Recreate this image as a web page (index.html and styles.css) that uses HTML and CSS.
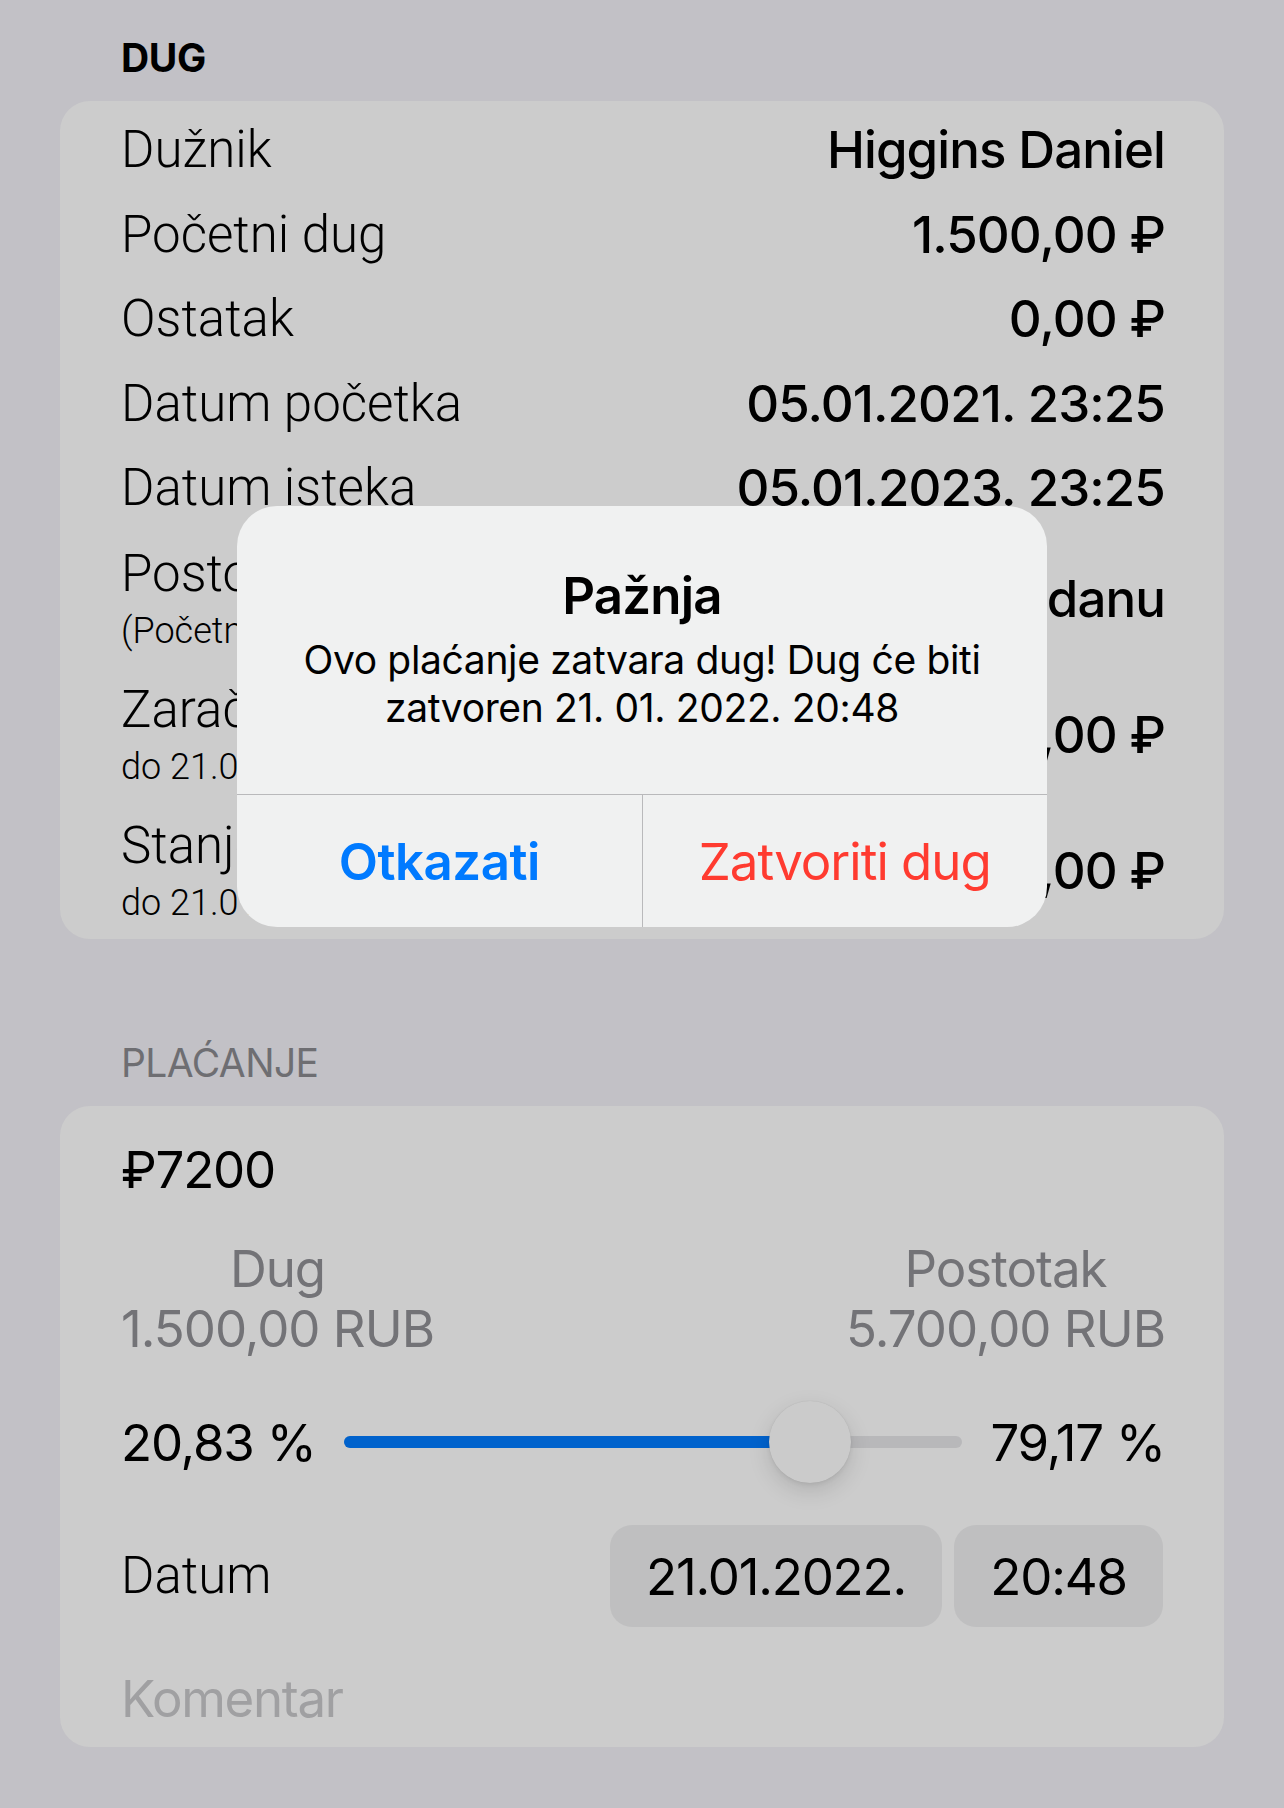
FILE: index.html
```html
<!DOCTYPE html>
<html lang="hr">
<head>
<meta charset="utf-8">
<title>Dug</title>
<link rel="stylesheet" href="styles.css">
</head>
<body>
<div class="screen">
  <div class="section-header header-debt">DUG</div>
  <div class="card card-debt">
    <div class="row"><span class="label">Dužnik</span><span class="value">Higgins Daniel</span></div>
    <div class="row"><span class="label">Početni dug</span><span class="value">1.500,00 ₽</span></div>
    <div class="row"><span class="label">Ostatak</span><span class="value">0,00 ₽</span></div>
    <div class="row"><span class="label">Datum početka</span><span class="value">05.01.2021. 23:25</span></div>
    <div class="row"><span class="label">Datum isteka</span><span class="value">05.01.2023. 23:25</span></div>
    <div class="row row-two">
      <div class="label-stack"><span class="label">Postotak</span><span class="sub">(Početni dug)</span></div>
      <span class="value">1,00 % po danu</span>
    </div>
    <div class="row row-two">
      <div class="label-stack"><span class="label">Zaračunato</span><span class="sub">do 21.01.2022.</span></div>
      <span class="value">5.700,00 ₽</span>
    </div>
    <div class="row row-two">
      <div class="label-stack"><span class="label">Stanje</span><span class="sub">do 21.01.2022.</span></div>
      <span class="value">7.200,00 ₽</span>
    </div>
  </div>

  <div class="section-header header-pay">PLAĆANJE</div>
  <div class="card card-pay">
    <div class="amount-row">₽7200</div>
    <div class="split-row">
      <div class="split-col"><span>Dug</span><span>1.500,00 RUB</span></div>
      <div class="split-col"><span>Postotak</span><span>5.700,00 RUB</span></div>
    </div>
    <div class="slider-row">
      <span class="pct">20,83 %</span>
      <div class="track">
        <div class="track-fill"></div>
        <div class="thumb"></div>
      </div>
      <span class="pct">79,17 %</span>
    </div>
    <div class="date-row">
      <span class="label">Datum</span>
      <div class="pills">
        <span class="pill pill-date">21.01.2022.</span>
        <span class="pill pill-time">20:48</span>
      </div>
    </div>
    <div class="comment-row">Komentar</div>
  </div>
</div>

<div class="alert">
  <div class="alert-body">
    <div class="alert-title">Pažnja</div>
    <div class="alert-msg">
      <span class="msg-line">Ovo plaćanje zatvara dug! Dug će biti</span>
      <span class="msg-line">zatvoren 21. 01. 2022. 20:48</span>
    </div>
  </div>
  <div class="alert-actions">
    <div class="alert-btn btn-cancel">Otkazati</div>
    <div class="alert-btn btn-destructive">Zatvoriti dug</div>
  </div>
</div>
</body>
</html>
```

FILE: styles.css
```css
* {
  box-sizing: border-box;
}

html, body {
  margin: 0;
  padding: 0;
}

body {
  width: 1284px;
  height: 1808px;
  background: #c2c1c6;
  font-family: Inter, "Noto Sans", "DejaVu Sans", sans-serif;
  color: #000;
  position: relative;
  overflow: hidden;
}

.screen {
  padding: 0 60px;
}

.section-header {
  font-size: 39px;
  line-height: 47px;
  padding-left: 61px;
  letter-spacing: -0.3px;
}

.header-debt {
  height: 101px;
  padding-top: 34px;
  font-weight: 700;
}

.header-pay {
  height: 167px;
  padding-top: 100px;
  font-weight: 400;
  letter-spacing: -0.6px;
  color: #6e6e72;
}

.card {
  background: #cccccc;
  border-radius: 30px;
  padding: 0 59px 0 61px;
}

.card-debt {
  padding-top: 7px;
  height: 838px;
}

.row {
  height: 84.5px;
  display: flex;
  align-items: center;
  justify-content: space-between;
}

.row-two {
  height: 136px;
}

.label {
  font-family: Roboto, Inter, sans-serif;
  font-size: 51px;
  font-weight: 300;
  letter-spacing: 0;
  line-height: 64px;
  white-space: nowrap;
}

.value {
  font-size: 51px;
  font-weight: 500;
  letter-spacing: -0.9px;
  line-height: 64px;
  white-space: nowrap;
}

.label-stack {
  display: flex;
  flex-direction: column;
}

.sub {
  font-family: Roboto, Inter, sans-serif;
  font-size: 36px;
  font-weight: 300;
  line-height: 50px;
  letter-spacing: 0;
  white-space: nowrap;
}

/* Payment card */
.card-pay {
  height: 641px;
  display: flex;
  flex-direction: column;
}

.amount-row {
  height: 127px;
  display: flex;
  align-items: center;
  font-size: 51px;
  font-weight: 400;
  letter-spacing: -1.2px;
}

.split-row {
  display: flex;
  justify-content: space-between;
  padding-top: 6px;
  height: 126px;
}

.split-col {
  display: flex;
  flex-direction: column;
  align-items: center;
  font-size: 51px;
  line-height: 60px;
  font-weight: 400;
  letter-spacing: -1px;
  color: #737377;
}

.slider-row {
  height: 166px;
  display: flex;
  align-items: center;
  gap: 28px;
}

.pct {
  font-size: 51px;
  font-weight: 400;
  letter-spacing: -1.2px;
  white-space: nowrap;
}

.track {
  flex: 1;
  height: 12px;
  border-radius: 6px;
  background: #b8b8ba;
  position: relative;
}

.track-fill {
  position: absolute;
  left: 0;
  top: 0;
  bottom: 0;
  width: calc((100% - 82px) * 0.7917 + 41px);
  background: #0062cc;
  border-radius: 6px 0 0 6px;
}

.thumb {
  position: absolute;
  top: -35px;
  left: calc((100% - 82px) * 0.7917);
  width: 82px;
  height: 82px;
  border-radius: 50%;
  background: #cbcbcb;
  box-shadow: 0 8px 22px rgba(0, 0, 0, 0.13), 0 2px 4px rgba(0, 0, 0, 0.06), 0 0 1px rgba(0, 0, 0, 0.1);
}

.date-row {
  height: 102px;
  display: flex;
  align-items: center;
  justify-content: space-between;
}

.pills {
  display: flex;
  gap: 12px;
  height: 102px;
  margin-right: 2px;
}

.pill {
  background: #bfbfc0;
  border-radius: 22px;
  height: 102px;
  display: flex;
  align-items: center;
  justify-content: center;
  font-size: 51px;
  font-weight: 400;
  letter-spacing: -1.2px;
}

.pill-date {
  width: 332px;
}

.pill-time {
  width: 209px;
}

.comment-row {
  margin-top: 23px;
  height: 96px;
  display: flex;
  align-items: center;
  font-size: 51px;
  font-weight: 400;
  letter-spacing: -1.3px;
  color: #a0a0a2;
}

/* Alert overlay */
.alert {
  position: absolute;
  left: 237px;
  top: 506px;
  width: 810px;
  height: 421px;
  background: #f0f1f1;
  border-radius: 40px;
  overflow: hidden;
  display: flex;
  flex-direction: column;
}

.alert-body {
  height: 288px;
  padding-top: 59px;
  display: flex;
  flex-direction: column;
  align-items: center;
}

.alert-title {
  font-size: 51px;
  line-height: 62px;
  font-weight: 600;
  letter-spacing: -0.8px;
}

.alert-msg {
  margin-top: 9px;
  display: flex;
  flex-direction: column;
  align-items: center;
  font-size: 39px;
  line-height: 48px;
  font-weight: 400;
  letter-spacing: -0.35px;
}

.msg-line {
  white-space: nowrap;
}

.alert-actions {
  flex: 1;
  display: flex;
  border-top: 1.5px solid #b9b9bb;
}

.alert-btn {
  flex: 1;
  display: flex;
  align-items: center;
  justify-content: center;
  font-size: 51px;
  letter-spacing: -0.5px;
}

.btn-cancel {
  color: #007aff;
  font-weight: 600;
}

.btn-destructive {
  color: #ff3b30;
  font-weight: 400;
  letter-spacing: -1px;
  border-left: 1.5px solid #b9b9bb;
}
```
